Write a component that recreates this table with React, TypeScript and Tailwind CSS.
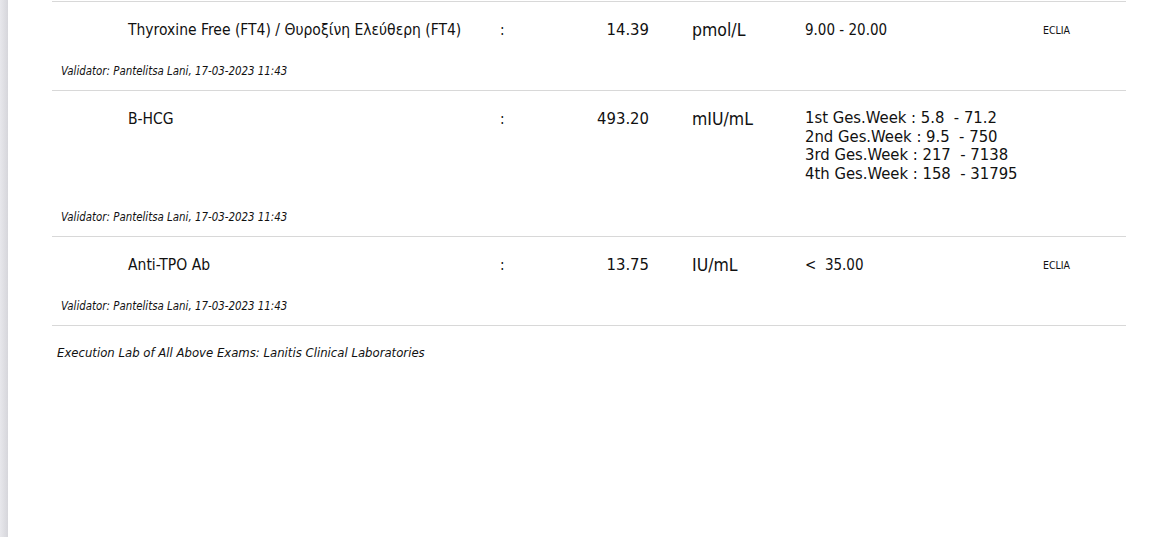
const FONT = "font-['DejaVu_Sans_Condensed','DejaVu_Sans',sans-serif]";

type Result = {
  name: string;
  value: string;
  unit: string;
  range: string[];
  method?: string;
  bigRange?: boolean;
};

const RESULTS: Result[] = [
  {
    name: "Thyroxine Free (FT4) / Θυροξίνη Ελεύθερη (FT4)",
    value: "14.39",
    unit: "pmol/L",
    range: ["9.00 - 20.00"],
    method: "ECLIA",
  },
  {
    name: "B-HCG",
    value: "493.20",
    unit: "mIU/mL",
    range: [
      "1st Ges.Week : 5.8  - 71.2",
      "2nd Ges.Week : 9.5  - 750",
      "3rd Ges.Week : 217  - 7138",
      "4th Ges.Week : 158  - 31795",
    ],
    bigRange: true,
  },
  {
    name: "Anti-TPO Ab",
    value: "13.75",
    unit: "IU/mL",
    range: ["<  35.00"],
    method: "ECLIA",
  },
];

const VALIDATOR = "Validator: Pantelitsa Lani, 17-03-2023 11:43";

function ResultRow({ r }: { r: Result }) {
  return (
    <div className="border-b border-[#d8d8d8] pt-[18px] pb-[12px]">
      {/* main line */}
      <div className="grid grid-cols-[76px_372px_40px_109px_156px_238px_1fr] items-start text-[#111] leading-[20px]">
        <div />
        <div className="text-[15.5px]">{r.name}</div>
        <div className="text-[15px]">:</div>
        <div className="text-[16.5px] text-right">{r.value}</div>
        <div className="text-[17.5px] pl-[43px]">{r.unit}</div>
        <div
          className={
            r.bigRange
              ? "text-[16.5px] leading-[18.7px] pb-[2px] whitespace-pre"
              : "text-[15px] whitespace-pre"
          }
        >
          {r.range.map((line) => (
            <div key={line}>{line}</div>
          ))}
        </div>
        <div className="text-[10.5px]">{r.method}</div>
      </div>

      {/* validator */}
      <div className="mt-[24px] pl-[9px] text-[11.4px] italic leading-[14px] text-[#111]">
        {VALIDATOR}
      </div>
    </div>
  );
}

export default function App() {
  return (
    <div className={`flex min-h-[537px] w-full bg-white ${FONT}`}>
      {/* left gutter of viewer */}
      <div className="w-[8px] shrink-0 bg-gradient-to-r from-[#e8e8ec] to-[#d6d6db]" />

      <div className="flex-1 pl-[44px] pr-[32px]">
        <div className="mt-[1px] border-t border-[#d8d8d8]">
          {RESULTS.map((r) => (
            <ResultRow key={r.name} r={r} />
          ))}
        </div>

        <p className="mt-[19px] pl-[5px] text-[13px] italic leading-[16px] text-[#111]">
          Execution Lab of All Above Exams: Lanitis Clinical Laboratories
        </p>
      </div>
    </div>
  );
}
